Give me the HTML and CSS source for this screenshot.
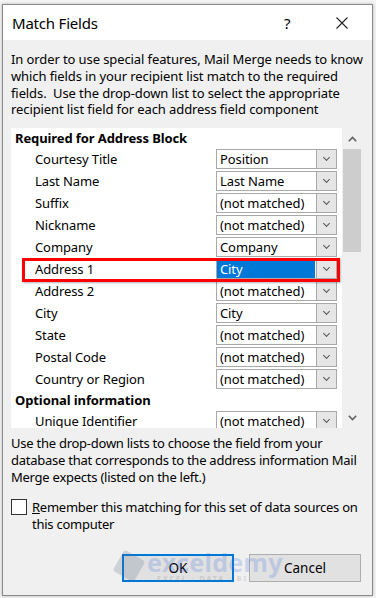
FILE: index.html
```html
<!DOCTYPE html>
<html>
<head>
<meta charset="utf-8">
<link rel="stylesheet" href="styles.css">
</head>
<body>
<div class="backdrop">
  <div class="dialog">
    <div class="titlebar">
      <span class="title">Match Fields</span>
      <span class="help">?</span>
      <span class="close"><svg width="12" height="12" viewBox="0 0 12 12"><path d="M0.5 0.5L11.5 11.5M11.5 0.5L0.5 11.5" stroke="#222" stroke-width="1.1" fill="none"/></svg></span>
    </div>
    <div class="body">
      <p class="intro">In order to use special features, Mail Merge needs to know which fields in your recipient list match to the required fields.&nbsp; Use the drop-down list to select the appropriate recipient list field for each address field component</p>
      <div class="listwrap">
        <div class="list">
          <div class="group">Required for Address Block</div>
          <div class="row"><span class="label">Courtesy Title</span><span class="combo"><span class="val">Position</span><span class="btn"></span></span></div>
          <div class="row"><span class="label">Last Name</span><span class="combo"><span class="val">Last Name</span><span class="btn"></span></span></div>
          <div class="row"><span class="label">Suffix</span><span class="combo"><span class="val">(not matched)</span><span class="btn"></span></span></div>
          <div class="row"><span class="label">Nickname</span><span class="combo"><span class="val">(not matched)</span><span class="btn"></span></span></div>
          <div class="row"><span class="label">Company</span><span class="combo"><span class="val">Company</span><span class="btn"></span></span></div>
          <div class="row"><span class="label">Address 1</span><span class="combo"><span class="val sel">City</span><span class="btn"></span></span></div>
          <div class="row"><span class="label">Address 2</span><span class="combo"><span class="val">(not matched)</span><span class="btn"></span></span></div>
          <div class="row"><span class="label">City</span><span class="combo"><span class="val">City</span><span class="btn"></span></span></div>
          <div class="row"><span class="label">State</span><span class="combo"><span class="val">(not matched)</span><span class="btn"></span></span></div>
          <div class="row"><span class="label">Postal Code</span><span class="combo"><span class="val">(not matched)</span><span class="btn"></span></span></div>
          <div class="row"><span class="label">Country or Region</span><span class="combo"><span class="val">(not matched)</span><span class="btn"></span></span></div>
          <div class="group">Optional information</div>
          <div class="row"><span class="label">Unique Identifier</span><span class="combo"><span class="val">(not matched)</span><span class="btn"></span></span></div>
          <div class="highlight"></div>
        </div>
        <div class="scrollbar">
          <svg class="arrow" width="9" height="6" viewBox="0 0 9 6"><path d="M0.8 5.2L4.5 1.5L8.2 5.2" stroke="#606060" stroke-width="1.6" fill="none"/></svg>
          <div class="track"><div class="thumb"></div></div>
          <svg class="arrow" width="9" height="6" viewBox="0 0 9 6"><path d="M0.8 0.8L4.5 4.5L8.2 0.8" stroke="#606060" stroke-width="1.6" fill="none"/></svg>
        </div>
      </div>
      <p class="note">Use the drop-down lists to choose the field from your database that corresponds to the address information Mail Merge expects (listed on the left.)</p>
      <div class="check">
        <span class="box"></span>
        <span class="checklabel"><u>R</u>emember this matching for this set of data sources on this computer</span>
      </div>
      <div class="buttons">
        <span class="button ok">OK</span>
        <span class="button">Cancel</span>
        <div class="watermark">
          <span class="wm-logo"></span>
          <span class="wm-text"><span class="wm-big">exceldemy</span><span class="wm-small">EXCEL · DATA · BI</span></span>
        </div>
      </div>
    </div>
  </div>
</div>
</body>
</html>
```

FILE: styles.css
```css
html, body {
  margin: 0;
  padding: 0;
}
body {
  width: 376px;
  height: 598px;
  overflow: hidden;
  background: #f4f4f4;
  font-family: "Noto Sans", "Open Sans", sans-serif;
  font-size: 13px;
  color: #000;
}
.backdrop {
  padding: 4px 3px 0 2px;
}
.dialog {
  width: 369px;
  height: 590px;
  border: 1px solid #8a8a8a;
  background: #f0f0f0;
  display: flex;
  flex-direction: column;
  box-shadow: 0 0 3px rgba(0,0,0,0.25);
}
.titlebar {
  height: 35px;
  background: #fff;
  display: flex;
  align-items: center;
  padding-left: 9px;
  flex: none;
}
.title {
  font-size: 15px;
  flex: 1;
  letter-spacing: -0.2px;
}
.help {
  font-size: 15px;
  width: 20px;
  margin-right: 32px;
}
.close {
  display: flex;
  width: 30px;
  margin-right: 6px;
}
.body {
  padding: 0 0 0 8px;
  display: flex;
  flex-direction: column;
  position: relative;
}
.intro {
  margin: 11px 0 0 0;
  line-height: 16.8px;
  width: 352px;
  letter-spacing: -0.1px;
}
.listwrap {
  margin-top: 10px;
  display: flex;
  height: 300px;
}
.list {
  width: 331px;
  height: 300px;
  background: #fff;
  overflow: hidden;
  position: relative;
}
.group {
  height: 20px;
  line-height: 21px;
  font-weight: bold;
  padding-left: 4px;
  letter-spacing: -0.1px;
}
.row {
  height: 22px;
  display: flex;
  align-items: center;
}
.label {
  width: 181px;
  padding-left: 24px;
  letter-spacing: -0.1px;
}
.combo {
  width: 119px;
  height: 18px;
  border: 1px solid #a9a9a9;
  display: flex;
  background: #fff;
}
.val {
  flex: 1;
  padding-left: 3px;
  line-height: 18px;
  letter-spacing: -0.1px;
  white-space: nowrap;
}
.val.sel {
  background: #0078d7;
  color: #fff;
  margin: 0 1px 0 0;
}
.btn {
  width: 19px;
  flex: none;
  border-left: 1px solid #a9a9a9;
  background: #e6e6e6;
  position: relative;
}
.btn::after {
  content: "";
  position: absolute;
  left: 7px;
  top: 5px;
  width: 4px;
  height: 4px;
  border-right: 1px solid #555;
  border-bottom: 1px solid #555;
  transform: rotate(45deg);
}
.highlight {
  position: absolute;
  left: 11px;
  top: 130px;
  width: 312px;
  height: 18px;
  border: 3px solid #f00;
  box-shadow: 1px 1px 2px rgba(0,0,0,0.3);
}
.scrollbar {
  width: 20px;
  display: flex;
  flex-direction: column;
  align-items: center;
}
.scrollbar .arrow {
  margin: 8px 0 7px 0;
  flex: none;
}
.track {
  flex: 1;
  width: 100%;
  padding-left: 1px;
}
.thumb {
  width: 18px;
  height: 103px;
  background: #cdcdcd;
}
.note {
  margin: 7px 0 0 0;
  line-height: 17px;
  width: 358px;
  letter-spacing: -0.25px;
}
.check {
  display: flex;
  margin-top: 13px;
  align-items: flex-start;
}
.box {
  width: 14px;
  height: 14px;
  border: 1px solid #333;
  background: #fff;
  flex: none;
  margin-top: 0;
}
.checklabel {
  margin-left: 5px;
  line-height: 17px;
  width: 337px;
  letter-spacing: -0.25px;
}
.buttons {
  display: flex;
  gap: 15px;
  margin-top: 21px;
  padding-left: 111px;
  position: relative;
}
.button {
  width: 110px;
  height: 26px;
  border: 1px solid #adadad;
  background: #e1e1e1;
  display: flex;
  align-items: center;
  justify-content: center;
  font-size: 13.5px;
}
.button.ok {
  width: 108px;
  height: 24px;
  border: 2px solid #0078d7;
}
.watermark {
  position: absolute;
  left: 106px;
  top: -4px;
  display: flex;
  align-items: center;
  gap: 6px;
  opacity: 0.22;
  pointer-events: none;
}
.wm-logo {
  width: 24px;
  height: 24px;
  background: #5a6a88;
  transform: rotate(30deg);
  border-radius: 3px;
}
.wm-text {
  display: flex;
  flex-direction: column;
  line-height: 1;
}
.wm-big {
  font-size: 25px;
  font-weight: bold;
  color: #3f6ee0;
  letter-spacing: 0.3px;
}
.wm-small {
  font-size: 7px;
  font-weight: bold;
  color: #777;
  letter-spacing: 2px;
  margin-left: 10px;
}
```
